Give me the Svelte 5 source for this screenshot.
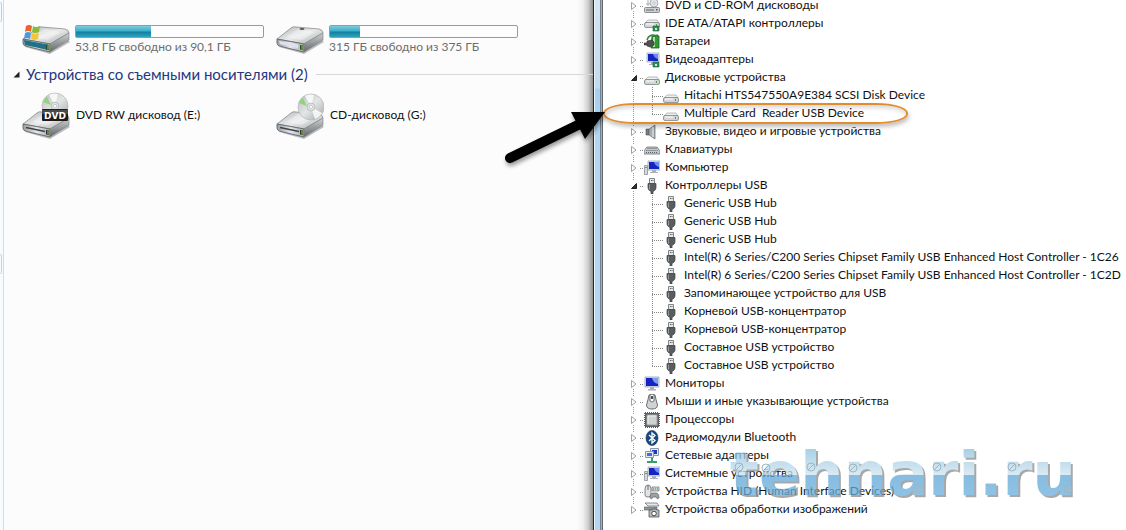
<script>
	const drives = [
		{ icon: 'system', label: '53,8 ГБ свободно из 90,1 ГБ', used: 40 },
		{ icon: 'disk', label: '315 ГБ свободно из 375 ГБ', used: 16 }
	];

	const removable = [
		{ icon: 'dvd', label: 'DVD RW дисковод (E:)' },
		{ icon: 'cd', label: 'CD-дисковод (G:)' }
	];

	let mediaOpen = $state(true);

	let tree = $state([
		{ icon: 'optical', label: 'DVD и CD-ROM дисководы' },
		{ icon: 'ide', label: 'IDE ATA/ATAPI контроллеры' },
		{ icon: 'battery', label: 'Батареи' },
		{ icon: 'video', label: 'Видеоадаптеры' },
		{
			icon: 'hdd',
			label: 'Дисковые устройства',
			open: true,
			children: [
				{ label: 'Hitachi HTS547550A9E384 SCSI Disk Device' },
				{ label: 'Multiple Card  Reader USB Device', marked: true }
			]
		},
		{ icon: 'sound', label: 'Звуковые, видео и игровые устройства' },
		{ icon: 'keyboard', label: 'Клавиатуры' },
		{ icon: 'computer', label: 'Компьютер' },
		{
			icon: 'usb',
			label: 'Контроллеры USB',
			open: true,
			children: [
				{ label: 'Generic USB Hub' },
				{ label: 'Generic USB Hub' },
				{ label: 'Generic USB Hub' },
				{ label: 'Intel(R) 6 Series/C200 Series Chipset Family USB Enhanced Host Controller - 1C26' },
				{ label: 'Intel(R) 6 Series/C200 Series Chipset Family USB Enhanced Host Controller - 1C2D' },
				{ label: 'Запоминающее устройство для USB' },
				{ label: 'Корневой USB-концентратор' },
				{ label: 'Корневой USB-концентратор' },
				{ label: 'Составное USB устройство' },
				{ label: 'Составное USB устройство' }
			]
		},
		{ icon: 'monitor', label: 'Мониторы' },
		{ icon: 'mouse', label: 'Мыши и иные указывающие устройства' },
		{ icon: 'cpu', label: 'Процессоры' },
		{ icon: 'bluetooth', label: 'Радиомодули Bluetooth' },
		{ icon: 'network', label: 'Сетевые адаптеры' },
		{ icon: 'computer', label: 'Системные устройства' },
		{ icon: 'hid', label: 'Устройства HID (Human Interface Devices)' },
		{ icon: 'imaging', label: 'Устройства обработки изображений' }
	]);

	// centres of the screws on the logo letters
	const screws = [
		[9, 23],
		[36, 24],
		[81, 23],
		[123, 24],
		[188, 45],
		[207, 23],
		[282, 23],
		[338, 45]
	];
</script>

{#snippet driveBody()}
	<path d="M3 23 28 30 48 18 46 16 28 24Z" fill="#7b7e80" opacity=".5" />
	<path d="M1 15 15 4Q17 2 20 3L43 5Q47 6 47 9L28 20Z" fill="url(#top)" stroke="#7a7e80" stroke-width=".7" />
	<path d="M1 15 28 20 28 28 3 22Q1 21 1 19Z" fill="url(#front)" stroke="#63676a" stroke-width=".9" />
	<path d="M28 20 47 9 47 16 28 28Z" fill="url(#side)" stroke="#7a7e80" stroke-width=".6" />
	<path d="M10 13 22 5 39 8 26 16Z" fill="#fff" opacity=".35" />
{/snippet}

{#snippet disc(cx, cy)}
	<circle {cx} {cy} r="13" fill="url(#disc)" stroke="#b3b6b8" stroke-width=".7" />
	<path d="M{cx} {cy} {cx - 6} {cy - 11}A13 13 0 0 1 {cx + 3} {cy - 12}Z" fill="#fff" opacity=".8" />
	<path d="M{cx} {cy} {cx + 11} {cy + 6}A13 13 0 0 1 {cx + 4} {cy + 12}Z" fill="#fff" opacity=".8" />
	<path d="M{cx - 4} {cy - 1} {cx - 12} {cy - 4}A13 13 0 0 1 {cx - 8} {cy - 9}Z" fill="#86d56a" opacity=".85" />
	<circle {cx} {cy} r="4" fill="#dfe2e4" stroke="#a5a9ab" stroke-width=".6" />
	<circle {cx} {cy} r="1.6" fill="#fff" stroke="#a5a9ab" stroke-width=".5" />
{/snippet}

{#snippet screen()}
	<path d="M3 1h12v9H3z" fill="#dfe6ee" stroke="#9aa5b5" stroke-width=".8" />
	<path d="M4 2h10v7H4z" fill="#1623c4" />
	<path d="M9 2h5v5Q10 6 9 2Z" fill="#6d8cf0" />
	<path d="M7 10h4v2h2v1H5v-1h2z" fill="#a9b2bb" />
{/snippet}

{#snippet card()}
	<path d="M9 10h6v5H9z" fill="#2f8d55" stroke="#1c5c38" stroke-width=".6" />
	<path d="M11 12h2v2h-2z" fill="#cfe9d6" />
{/snippet}

{#snippet smallDrive()}
	<path d="M1 8 4 5h9l2 3z" fill="#eff0f0" stroke="#9b9fa1" stroke-width=".7" />
	<rect x=".5" y="7.5" width="15" height="5" rx="1.5" fill="#d3d6d7" stroke="#808587" stroke-width=".8" />
	<path d="M2 9h8" stroke="#fff" />
	<path d="M12 9h1v2h-1z" fill="#4d9b57" />
{/snippet}

{#snippet icon(kind)}
	<svg class="icon" viewBox="0 0 16 16" aria-hidden="true">
		{#if kind === 'optical'}
			<circle cx="10" cy="5" r="4" fill="#e3e6e8" stroke="#8f9598" stroke-width=".7" />
			<circle cx="10" cy="5" r="1.2" fill="#fff" stroke="#8f9598" stroke-width=".5" />
			<path d="M4 2v6M2 6h4" stroke="#a8adaf" />
			<rect x=".5" y="9.5" width="15" height="5" rx="1" fill="#ccd0d2" stroke="#73797c" stroke-width=".8" />
			<path d="M2 12h8" stroke="#61676a" />
			<path d="M12 11h1.500v1.500H12z" fill="#4f5557" />
		{:else if kind === 'ide'}
			<g transform="translate(0 -1)">{@render smallDrive()}</g>
			{@render card()}
		{:else if kind === 'battery'}
			<path d="M8 2h4V1h2v1h1v12H7z" fill="#2f9a34" stroke="#1d6226" stroke-width=".8" />
			<path d="M9 3h2v10H9z" fill="#a9e59c" />
			<path d="M0 9h3V7l5-1q3 2 2 5l-4 2-3-1v-1H0z" fill="#4e5352" stroke="#2b2f2e" stroke-width=".6" />
			<path d="M3 6Q5-1 13 2" fill="none" stroke="#3b7f42" stroke-width="1.500" />
		{:else if kind === 'video'}
			{@render screen()}
			{@render card()}
		{:else if kind === 'hdd'}
			<g transform="translate(0 2)">{@render smallDrive()}</g>
		{:else if kind === 'sound'}
			<path d="M2 5h3v6H2z" fill="#777d80" stroke="#4e5355" stroke-width=".6" />
			<path d="M5 5 11 1v14L5 11Z" fill="#a8adaf" stroke="#666c6e" stroke-width=".7" />
			<path d="M9 3v10" stroke="#d9dcdd" stroke-width="1.500" />
		{:else if kind === 'keyboard'}
			<path d="M3 5h10l3 4v3H0V9z" fill="#c6cacc" stroke="#6d7376" stroke-width=".8" />
			<path d="M3.500 6.500h9M2.500 8.500h11M2 10.500h12" stroke="#5d6366" stroke-dasharray="1 1" />
		{:else if kind === 'computer'}
			<g transform="translate(1 0)">{@render screen()}</g>
			<path d="M.5 5.500h3v9h-3z" fill="#d5dadf" stroke="#868f97" stroke-width=".8" />
			<path d="M1 7.500h2" stroke="#59a860" />
		{:else if kind === 'usb'}
			<path d="M5.500.5h5v5h-5z" fill="#e4e6e7" stroke="#75797b" stroke-width=".9" />
			<path d="M7 2.500h1M8.500 2.500h1" stroke="#5d6163" />
			<path d="M4 5.500h8V10q0 2-3 3.500V16H7v-2.500q-3-1.500-3-3.500z" fill="#5a5d5f" stroke="#3e4142" stroke-width=".7" />
			<path d="M5.500 6.500v5" stroke="#95999b" />
		{:else if kind === 'monitor'}
			<path d="M1 1h14v10H1z" fill="#dfe6ee" stroke="#94a0b0" stroke-width=".8" />
			<path d="M2 2h12v8H2z" fill="#1623c4" />
			<path d="M8 2h6v6Q9 7 8 2Z" fill="#7c9af4" />
			<path d="M6 11h4v2h2v1.500H4V13h2z" fill="#aab2ba" />
		{:else if kind === 'mouse'}
			<path d="M5 1Q4 6 2.500 11q0 4 5.500 4t5.500-4Q12 6 11 1 8-1 5 1Z" fill="#d0d3d4" stroke="#5c6163" stroke-width=".9" />
			<path d="M6 1v6q2 2 4 0V1" fill="#fff" stroke="#4d5254" stroke-width=".8" />
			<path d="M7 2h2v3H7z" fill="#4a4e50" />
		{:else if kind === 'cpu'}
			<path d="M1 1h14v14H1z" fill="#5c6062" />
			<path d="M1 .5h14M1 15.500h14M.5 1v14M15.500 1v14" stroke="#5c6062" stroke-dasharray="1 1" />
			<rect x="3" y="3" width="10" height="10" fill="#cfd2d3" stroke="#9ea2a4" />
			<path d="M4 12V4h8" fill="none" stroke="#f2f3f3" />
		{:else if kind === 'bluetooth'}
			<ellipse cx="8" cy="8" rx="6" ry="7.500" fill="#16477f" stroke="#0b2d57" stroke-width=".6" />
			<path d="M5 5 11 10.500 8 13V3l3 2.500L5 11" fill="none" stroke="#fff" stroke-width="1.300" />
		{:else if kind === 'network'}
			<path d="M6.500.5h8v7h-8z" fill="#e5ebf2" stroke="#8b98a8" />
			<path d="M8 2h5v4H8z" fill="#2433ca" />
			<path d="M1.500 3.500h8v6h-8z" fill="#e5ebf2" stroke="#8b98a8" />
			<path d="M3 5h5v3H3z" fill="#4a67dd" />
			<path d="M8 10v3M3 14h10" stroke="#35a06a" stroke-width="2" />
		{:else if kind === 'hid'}
			<path d="M1 5q0-4 3-4t3 4v6q0 2-3 2t-3-2z" fill="#e1e3e4" stroke="#666b6e" stroke-width=".8" />
			<path d="M4 1v5" stroke="#666b6e" />
			<path d="M8 3h7v4H8z" fill="#d0d3d5" stroke="#6b7073" stroke-width=".7" />
			<path d="M9 5h5" stroke="#6b7073" stroke-dasharray="1 1" />
			<path d="M6 14q0-5 3-5h3q3 0 3 5-2 2-3-1H9q-1 3-3 1z" fill="#9ba0a3" stroke="#5e6366" stroke-width=".7" />
		{:else if kind === 'imaging'}
			<path d="M1 1h12l2 3H4z" fill="#e7e9ea" stroke="#6f7477" stroke-width=".8" />
			<path d="M0 5h13v3H0z" fill="#8e9497" stroke="#5d6265" stroke-width=".6" />
			<path d="M5 8h3l1-1h3l1 1h2v7H5z" fill="#b7bcbf" stroke="#505558" stroke-width=".8" />
			<circle cx="10" cy="11.500" r="2.300" fill="#fff" stroke="#44494b" />
		{/if}
	</svg>
{/snippet}

<svg class="defs" width="0" height="0" aria-hidden="true">
	<linearGradient id="top" x2="1" y2="1">
		<stop offset="0" stop-color="#b4b7b9" />
		<stop offset=".5" stop-color="#e9eaea" />
		<stop offset="1" stop-color="#a6aaac" />
	</linearGradient>
	<linearGradient id="front" x2="1" y2="0">
		<stop offset="0" stop-color="#989c9e" />
		<stop offset=".5" stop-color="#e4e7ec" />
		<stop offset="1" stop-color="#a6aaac" />
	</linearGradient>
	<linearGradient id="side" x2="0" y2="1">
		<stop offset="0" stop-color="#cfd2d3" />
		<stop offset="1" stop-color="#626668" />
	</linearGradient>
	<linearGradient id="disc" x2="1" y2="1">
		<stop offset="0" stop-color="#b9bcbe" />
		<stop offset=".5" stop-color="#e4e6e6" />
		<stop offset="1" stop-color="#a1a5a7" />
	</linearGradient>
</svg>

<div class="page">
	<section class="explorer">
		<div class="strip">
			<span></span>
			<span class="lower"></span>
		</div>
		<div class="content">
			<div class="items">
				{#each drives as drive}
					<div class="item">
						<svg width="48" height="32" viewBox="0 0 48 32" aria-hidden="true">
							<g transform="translate(0 1)">{@render driveBody()}</g>
							{#if drive.icon === 'system'}
								<path d="M2 17 26 21.500V27L3 22Z" fill="#1f7185" />
								<path d="M4 3Q7 1 10 3L9 9Q6 7 3 9Z" fill="#e8642a" />
								<path d="M11 3Q14 5 18 3L17 9Q13 11 10 9Z" fill="#86bd36" />
								<path d="M3 10Q6 8 9 10L8 16Q5 14 2 16Z" fill="#4b9bd8" />
								<path d="M10 10Q13 12 17 10L16 16Q12 18 9 16Z" fill="#f6c636" />
							{:else}
								<path d="M3 18 22 21.500V25L4 21Z" fill="#dfe2ee" />
								<ellipse cx="26" cy="6" rx="2.500" ry="1" fill="#56595b" />
							{/if}
							<path d="M24 22 27 22.500V27L24 26.500Z" fill="#294b23" />
							<path d="M26 22.500v4" stroke="#8edb3a" />
						</svg>
						<div class="usage">
							<div class="bar" role="progressbar" aria-label={drive.label} aria-valuenow={drive.used}>
								<div class="fill" style="width: {drive.used}%"></div>
							</div>
							<span class="free">{drive.label}</span>
						</div>
					</div>
				{/each}
			</div>

			<div class="heading">
				<button
					class="collapse"
					aria-label="Свернуть группу"
					aria-expanded={mediaOpen}
					onclick={() => (mediaOpen = !mediaOpen)}
				>
					<svg width="7" height="7" viewBox="0 0 7 7"><path d="M6.500.5v6h-6z" fill="#222" /></svg>
				</button>
				<h2>Устройства со съемными носителями (2)</h2>
				<hr />
			</div>

			{#if mediaOpen}
				<div class="items media">
					{#each removable as item}
						<div class="item">
							<svg width="48" height="48" viewBox="0 0 48 48" aria-hidden="true">
								<g transform="translate(0 18)">
									{@render driveBody()}
									<path d="M4 18.500 23 22.500" stroke="#3f4345" stroke-width="1.500" />
									<path d="M24 21 27 21.500V26L24 25.500Z" fill="#30342e" />
									<path d="M26 21.500v4" stroke="#8edb3a" />
								</g>
								{#if item.icon === 'dvd'}
									{@render disc(33, 15)}
									<rect x="20" y="18" width="26" height="12" rx="1" fill="#1c1c1c" />
									<path d="M20 19h26v4H20z" fill="#4b4b4b" />
									<text x="33" y="28" text-anchor="middle">DVD</text>
								{:else}
									{@render disc(35, 16)}
								{/if}
							</svg>
							<span class="name">{item.label}</span>
						</div>
					{/each}
				</div>
			{/if}
		</div>
	</section>

	<div class="frame"></div>

	<section class="manager">
		<ul class="tree">
			{#each tree as node}
				<li>
					<div class="row">
						<button
							class="twisty"
							aria-label={node.label}
							aria-expanded={!!node.open}
							onclick={() => (node.open = !node.open)}
						>
							<svg width="8" height="10" viewBox="0 0 8 10">
								{#if node.open}
									<path d="M6.500 2.500v5h-5z" fill="#333" stroke="#222" />
								{:else}
									<path d="M1.500 1.500 6 5 1.500 8.500z" fill="#fff" stroke="#a0a0a0" />
								{/if}
							</svg>
						</button>
						<span class="dots"></span>
						{@render icon(node.icon)}
						<span class="label">{node.label}</span>
					</div>
					{#if node.open && node.children}
						<ul class="children">
							{#each node.children as child}
								<li class="row child" class:marked={child.marked}>
									<span class="dots"></span>
									{@render icon(node.icon)}
									<span class="label">{child.label}</span>
								</li>
							{/each}
						</ul>
					{/if}
				</li>
			{/each}
		</ul>

		<svg class="arrow" width="110" height="60" viewBox="0 0 110 60" aria-hidden="true">
			<path d="M10 53 82 18" stroke="#000" stroke-width="10" stroke-linecap="round" />
			<path d="M71 7h34L85 34z" fill="#000" />
		</svg>
	</section>

	<div class="watermark">
		<span>tehnari.ru</span>
		<svg width="346" height="60" viewBox="0 0 346 60" aria-hidden="true">
			{#each screws as [x, y]}
				<circle cx={x} cy={y} r="4" />
				<path d="M{x - 3} {y + 3}l6-6" />
			{/each}
		</svg>
	</div>
</div>

<style>
	:global(body) {
		margin: 0;
		background: #fff;
	}

	.page {
		position: relative;
		display: grid;
		grid-template-columns: minmax(0, 593fr) 10px minmax(0, 523fr);
		min-height: 100vh;
		overflow: hidden;
		font-family: Lato, 'Noto Sans', sans-serif;
		font-size: 12px;
		line-height: 18px;
		color: #111;
	}

	.defs {
		position: absolute;
	}

	button {
		padding: 0;
		border: 0;
		background: none;
		cursor: pointer;
	}

	svg {
		display: block;
		flex: none;
	}

	ul {
		list-style: none;
		margin: 0;
		padding: 0;
	}

	/* left window */
	.explorer {
		display: flex;
		background: linear-gradient(to left, #8d8d8d, #d0d0d0 5px, #f0f0f0 10px, #fcfcfd 16px);
	}

	.strip {
		width: 3px;
		flex: none;
		background: #f8fbfd;
		border-right: 1px solid #c9dfea;
	}

	.strip span {
		display: block;
		box-sizing: border-box;
		width: 2px;
		height: 20px;
		margin-top: 2px;
		border: 1px solid #a9d3ef;
		border-left: 0;
		border-radius: 0 2px 2px 0;
	}

	.strip .lower {
		margin-top: 232px;
		border-color: #c3d3dc;
	}

	.content {
		flex: 1;
		min-width: 0;
		padding-top: 23px;
	}

	.items {
		display: grid;
		grid-template-columns: repeat(2, 254px);
		padding-left: 18px;
	}

	.item {
		display: flex;
		gap: 5px;
	}

	.usage {
		width: 189px;
		padding-top: 2px;
	}

	.bar {
		box-sizing: border-box;
		height: 13px;
		border: 1px solid #9a9a9a;
		border-radius: 2px;
		background: #fdfdfd;
	}

	.fill {
		height: 100%;
		background: linear-gradient(to bottom, #7fcbdc, #3fafc9 45%, #14809f 55%, #2ba3c0);
	}

	.free {
		display: block;
		color: #6d6d6d;
	}

	.heading {
		display: flex;
		align-items: center;
		height: 24px;
		margin-top: 6px;
		padding-left: 9px;
	}

	.collapse {
		margin-right: 6px;
	}

	h2 {
		margin: 0;
		font-size: 15px;
		font-weight: 400;
		line-height: 24px;
		color: #24387e;
	}

	hr {
		flex: 1;
		margin: 0 0 0 8px;
		border: 0;
		border-top: 1px solid #d8d8d8;
	}

	.media {
		margin-top: 5px;
	}

	.media .item {
		align-items: center;
	}

	.media text {
		fill: #fff;
		font-family: 'DejaVu Sans', sans-serif;
		font-size: 9px;
		font-weight: 700;
	}

	.name {
		padding-left: 1px;
	}

	/* glass border between the windows */
	.frame {
		background:
			linear-gradient(to right, #1d2b33 1px, #e8f6fc 1px 2px, transparent 2px 7px, #76818b 7px 8px, #a9b0b8 8px 9px, #5f676e 9px),
			linear-gradient(to bottom, #d6e6f3, #c3daee 88px, #a5d0f1 89px, #b3d7f2 150px);
	}

	/* device tree */
	.manager {
		position: relative;
		background: #fff;
	}

	.tree {
		margin: -3px 0 11px;
		padding-left: 27px;
		background: repeating-linear-gradient(#999 0 1px, transparent 1px 2px) 30px 0 / 1px calc(100% - 9px) no-repeat;
	}

	.row {
		display: flex;
		align-items: center;
		height: 18px;
		white-space: pre;
	}

	.twisty {
		background: #fff;
	}

	.dots {
		width: 4px;
		height: 1px;
		margin-left: 2px;
		background: repeating-linear-gradient(to right, #888 0 1px, transparent 1px 2px);
	}

	.icon {
		width: 16px;
		height: 16px;
	}

	.label {
		padding: 0 0 2px 5px;
		line-height: 14px;
	}

	.children {
		margin-left: 22px;
		background: repeating-linear-gradient(#888 0 1px, transparent 1px 2px) 0 0 / 1px calc(100% - 9px) no-repeat;
	}

	.child .dots {
		width: 11px;
		margin-left: 0;
	}

	.marked::after {
		content: '';
		position: absolute;
		left: 0;
		box-sizing: border-box;
		width: 305px;
		height: 21px;
		margin-bottom: 2px;
		border: 2px solid #e28c2e;
		border-radius: 32px / 10px;
		box-shadow:
			1px 3px 4px rgba(0, 0, 0, 0.25),
			inset 1px 3px 4px rgba(0, 0, 0, 0.15);
	}

	.arrow {
		position: absolute;
		top: 105px;
		left: -103px;
		filter: drop-shadow(1px 3px 2px rgba(0, 0, 0, 0.4));
	}

	.watermark {
		position: absolute;
		right: 50px;
		bottom: 26px;
		opacity: 0.75;
		pointer-events: none;
	}

	.watermark span {
		display: block;
		font: 700 61px / 60px 'DejaVu Sans', sans-serif;
		color: transparent;
		background: linear-gradient(to bottom, #8dc3e0 6px, #cfe4f0 31px, #5fa7d8 31px, #6fb0da);
		background-clip: text;
		filter: drop-shadow(2px 2px 0 #8c8c8c);
	}

	.watermark svg {
		position: absolute;
		top: 0;
		left: 0;
		fill: none;
		stroke: #7f9fac;
	}
</style>
